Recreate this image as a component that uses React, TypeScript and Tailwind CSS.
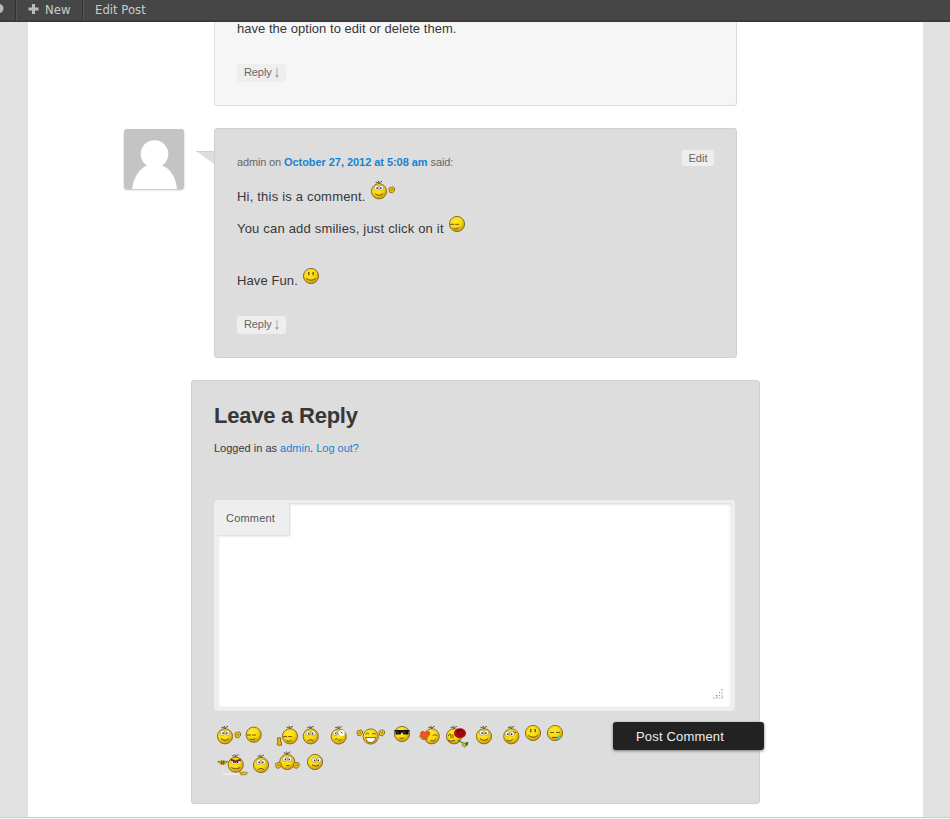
import type { ReactNode } from "react";

type Mood = "plain" | "wink" | "happy" | "sad" | "crazy" | "laugh" | "cool" | "love" | "rose" | "look" | "dots" | "cry" | "angry" | "grin";

function Eyes({ x = 0, y = -3.5 }: { x?: number; y?: number }) {
  return (
    <g transform={`translate(${x} ${y})`}>
      <ellipse cx="-2.4" rx="2.3" ry="2.5" fill="#fff" stroke="#94834c" strokeWidth=".6" />
      <ellipse cx="2.4" rx="2.3" ry="2.5" fill="#fff" stroke="#94834c" strokeWidth=".6" />
      <path d="M-1.9-.5v1.8M1.9-.5v1.8" stroke="#222" strokeWidth="1.3" />
    </g>
  );
}

function Features({ mood }: { mood: Mood }) {
  const line = { fill: "none", stroke: "#70520a", strokeWidth: 1 };
  switch (mood) {
    case "wink":
      return <g {...line}><path d="M-6.8.3h4M-1.8.3h4" /><path d="M-3.5 4.2q2 1.8 4.2.2l.5-1" /></g>;
    case "happy":
      return <g><Eyes /><path d="M-4 2.3q4 3.5 8 0" {...line} /></g>;
    case "sad":
      return <g><Eyes y={-3} /><path d="M-2.8 4.5q2.8-2.5 5.6 0" {...line} /></g>;
    case "crazy":
      return <g><Eyes x={-1} /><circle cx="3" cy="-3.5" r="3" fill="#fff" /><path d="M2-4.5l2 1.5M-4 3l2-1 2 2 3-1" {...line} /></g>;
    case "laugh":
      return <g><path d="M-5-2.3q1.8-2 3.5 0M1.5-2.3q1.8-2 3.5 0" {...line} /><path d="M-5 1h10q-1 5-5 5t-5-5z" fill="#fff" stroke="#70520a" strokeWidth=".8" /></g>;
    case "cool":
      return <g><path d="M-7.5-4h15v1.5h-1V.5h-5l-1-2h-1l-1 2h-5v-3h-1z" fill="#111" /><path d="M-5.5-2.5l2 2M1.5-2.5l2 2" stroke="#777" strokeWidth=".7" /><path d="M-2.5 4q2.5 1 4.5-.3" {...line} /></g>;
    case "love":
      return <g {...line}><path d="M1-.8q2-1.5 4.5 0M-1 4q3 2 5-1" /></g>;
    case "rose":
      return <g {...line}><path d="M-6 4q3 2 7 0M-6 0q1-3 3-2v4M-1-2v4" /></g>;
    case "look":
      return <g><Eyes x={-1.5} y={-2.5} /><path d="M-5 3.5q4 3 6.5-1M2-4.5l3 1" {...line} /></g>;
    case "dots":
      return <g><path d="M-2.2-4v3.2M2.2-4v3.2" stroke="#5c4708" strokeWidth="1.3" /><path d="M-4.8 2.5q4.8 3.4 9.6 0" {...line} /></g>;
    case "cry":
      return <g><path d="M-5-.8q2 1 4 0M1-.8q2 1 4 0M-3 4.5h5.5" {...line} /><circle cx="3.9" cy="4.2" r="1.5" fill="#49c5ec" /></g>;
    case "angry":
      return <g><Eyes y={-3} /><path d="M-5-5l5 2 5-2" fill="none" stroke="#7e2808" strokeWidth="1.8" /><path d="M-4.5 3q4.5 2.5 9 0" {...line} /></g>;
    case "grin":
      return <g><Eyes x={1.5} y={-2} /><path d="M-3 3q4.5 2.5 7 0" {...line} /></g>;
    default:
      return <g><Eyes y={-3} /><path d="M-1 3.5h3" {...line} /></g>;
  }
}

function Smiley({ w, cx, cy = 14, mood, hair = false, children }: { w: number; cx: number; cy?: number; mood: Mood; hair?: boolean; children?: ReactNode }) {
  return (
    <svg width={w} height="28" viewBox={`0 0 ${w} 28`} className="block shrink-0 overflow-visible">
      <defs>
        <radialGradient id="face" cx="42%" cy="35%" r="68%">
          <stop offset="0" stopColor="#ffec28" />
          <stop offset=".55" stopColor="#f7d90f" />
          <stop offset="1" stopColor="#c48d0a" />
        </radialGradient>
      </defs>
      <g transform={`translate(${cx} ${cy})`}>
        <circle r="7.6" fill="url(#face)" stroke="#8d6f2c" strokeWidth="1" />
        {hair && <path d="M0-7.5q-1-2-3.5-1.5M0-7.5q0-2-1-3M0-7.5q1-2.5 3-2.5" fill="none" stroke="#655438" strokeWidth="1" />}
        <Features mood={mood} />
        {children}
      </g>
    </svg>
  );
}

function Hand({ x, y }: { x: number; y: number }) {
  return (
    <g transform={`translate(${x} ${y})`} stroke="#8a6c20" strokeWidth=".9">
      <path d="M-2.8-1.5l1.5-1.5 1 .5 1-.8 2.2 1.3-.2 3-2 1.8-2.7-.5z" fill="#e9c51a" />
      <path d="M-1-.5l1.5 1M.5-1.5l.7 1.5" fill="none" />
    </g>
  );
}

function Waving() {
  return <Smiley w={28} cx={9} cy={14.3} mood="happy" hair><Hand x={12.7} y={-1.3} /></Smiley>;
}

function ReplyButton() {
  return (
    <span className="flex h-[18px] w-[49px] rounded-[3px] bg-[#eee] pl-[7px] text-[11px] leading-[17px] tracking-[-0.1px] text-[#666]">
      Reply
      <span className="ml-[2px] scale-y-140 font-['Liberation_Serif',serif] text-[12px] leading-[17px] text-[#777]">↓</span>
    </span>
  );
}

export default function App() {
  return (
    <div className="h-[819px] w-[950px] overflow-hidden bg-[#e2e2e2] font-['Liberation_Sans',Arial,sans-serif] text-[#373737]">
      <header className="flex h-[22px] border-b border-[#373737] bg-[#464646] font-['DejaVu_Sans_Condensed','DejaVu_Sans',sans-serif] text-[13px] leading-[20px] text-[#ccc] shadow-[inset_0_-1px_#3e3e3e]">
        <div className="h-[21px] w-[17px] border-r border-[#555] shadow-[inset_-1px_0_#333]">
          <svg width="5" height="20" viewBox="0 0 5 20"><circle cx="-1" cy="8.5" r="4.5" fill="#bbb" /></svg>
        </div>
        <div className="flex h-[21px] w-[67px] border-r border-[#555] pl-[11px] shadow-[inset_-1px_0_#333]">
          <svg width="17" height="20" viewBox="0 0 17 20"><path d="M5.5 4v10M.5 9h10" stroke="#bbb" strokeWidth="3" /></svg>
          New
        </div>
        <div className="pl-[11px]">Edit Post</div>
      </header>

      <main className="ml-[28px] h-[795px] w-[895px] bg-white">
        <article className="ml-[186px] h-[84px] w-[523px] rounded-b-[3px] border border-t-0 border-[#ddd] bg-[#f6f6f6] pl-[22px] text-[13px]">
          <p className="h-[42px] leading-[14px] tracking-[0.03px]">have the option to edit or delete them.</p>
          <ReplyButton />
        </article>

        <div className="mt-[22px] flex">
          <div className="ml-[96px] mt-px h-[60px] w-[60px] overflow-hidden rounded-[3px] bg-[#c4c4c4] shadow-[0_1px_2px_#bbb]">
            <svg width="60" height="60" viewBox="0 0 60 60" fill="#fff"><circle cx="30.5" cy="25" r="13.8" /><path d="M8 60C10 47 16 39 24 36h13c9 3 15 12 16 24z" /></svg>
          </div>
          <svg className="ml-[12px] mt-[23px] h-[14px] w-[18px]" viewBox="0 0 18 14"><path d="M0 0h18v13z" fill="#ddd" /><path d="M0 .5h18" stroke="#d0d0d0" /></svg>
          <article className="h-[230px] w-[523px] rounded-[3px] border border-[#d0d0d0] bg-[#ddd] px-[22px]">
            <div className="flex justify-between">
              <p className="pt-[27px] text-[11px] leading-[13px] text-[#666]"><span className="tracking-[-0.15px]">admin on </span><b className="tracking-[-0.05px] text-[#1982d1]">October 27, 2012 at 5:08 am</b><span className="tracking-[-0.1px]"> said:</span></p>
              <span className="mt-[21px] h-[16px] w-[32px] rounded-[3px] bg-[#eee] text-center text-[11px] leading-[16px] text-[#666]">Edit</span>
            </div>
            <div className="mt-[8px] flex h-[32px] text-[13px] leading-[40px] tracking-[0.2px]">Hi, this is a comment.<span className="ml-[4px]"><Waving /></span></div>
            <div className="flex h-[52px] text-[13px] leading-[40px] tracking-[0.19px]">You can add smilies, just click on it<span className="ml-[4px] mt-px"><Smiley w={18} cx={9} cy={14} mood="wink" /></span></div>
            <div className="flex h-[55px] text-[13px] leading-[40px] tracking-[0.1px]">Have Fun.<span className="ml-[4px] mt-px"><Smiley w={18} cx={9} cy={14} mood="dots" /></span></div>
            <ReplyButton />
          </article>
        </div>

        <section className="ml-[163px] mt-[22px] h-[424px] w-[569px] rounded-[3px] border border-[#d0d0d0] bg-[#ddd] pl-[22px]">
          <h3 className="pt-[21px] text-[22px] font-bold leading-[28px] tracking-[-0.23px]">Leave a Reply</h3>
          <p className="mt-[12px] text-[11px] leading-[13px]">Logged in as <span className="text-[#1982d1]">admin</span>. <span className="text-[#1982d1]">Log out?</span></p>
          <div className="mt-[45px] flex h-[211px] w-[521px] items-start justify-between rounded-[4px] border-[4px] border-t-[3px] border-[#eee] bg-white shadow-[inset_0_1px_3px_#d4d4d4]">
            <div className="-ml-px h-[32px] w-[72px] bg-[#eee] pl-[9px] text-[11px] leading-[30px] tracking-[0.2px] text-[#555] shadow-[1px_1px_2px_#d4d4d4]">Comment</div>
            <svg className="mb-[7px] mr-[7px] self-end" width="11" height="11" viewBox="0 0 11 11" fill="#d6d6d6"><path d="M8 0h2v2H8zM8 3h2v2H8zM8 6h2v2H8zM3 6h2v2H3zM8 8h2v2H8zM6 8h1v2H6zM3 8h2v2H3zM0 8h2v2H0z" /><path d="M6 3h1v1H6zM6 6h1v1H6zM3 6h1v1H3z" fill="#888" /></svg>
          </div>
          <div className="mt-[11px] flex">
            <div className="w-[399px] shrink-0">
              <div className="flex h-[28px]">
                <span className="ml-[2px]"><Waving /></span>
                <Smiley w={30} cx={9.7} cy={12.7} mood="wink" />
                <Smiley w={26} cx={16} cy={14.3} mood="wink" hair>
                  <path d="M-12.5-1h3v4l1 .5v3h-3l-1.5-1 .8-2z" fill="#e6b918" stroke="#8a6c20" transform="translate(0 2.5)" />
                </Smiley>
                <Smiley w={28} cx={10.7} cy={14.3} mood="sad" hair />
                <Smiley w={26} cx={10.7} cy={14.5} mood="crazy" hair />
                <Smiley w={36} cx={16.7} cy={14.5} mood="laugh"><Hand x={-11} y={-3.5} /><Hand x={11} y={-3.5} /></Smiley>
                <Smiley w={28} cx={12} cy={12} mood="cool" />
                <Smiley w={28} cx={13.7} cy={14.3} mood="love" hair>
                  <path d="M-12-1l3 3.5h5" fill="none" stroke="#b98720" strokeWidth="2.5" /><path d="M-6.5 3q-6-4.5-4.3-7.2 2.3-2.2 4.3.6 2-2.8 4.3-.6 1.7 2.7-4.3 7.2z" fill="#f4531f" stroke="#c94913" strokeWidth=".7" />
                </Smiley>
                <Smiley w={28} cx={8} cy={14.3} mood="rose" hair>
                  <path d="M4 4l7 4M8 8l6-2-1 3-3 0z" fill="#158338" stroke="#12782f" /><ellipse cx="6" cy="-3" rx="6" ry="5" fill="#b30912" /><path d="M2-5l4-2 4 3-3 3-4-3 4-2" fill="none" stroke="#69050a" /><path d="M9 6l3 2-1 3-3-2z" fill="#ebbd16" stroke="#8a6c20" strokeWidth=".6" />
                </Smiley>
                <Smiley w={26} cx={10} cy={14.3} mood="happy" hair />
                <Smiley w={24} cx={11.3} cy={14.3} mood="look" hair />
                <Smiley w={22} cx={9} cy={11} mood="dots" />
                <Smiley w={20} cx={9} cy={11} mood="cry" />
              </div>
              <div className="flex h-[28px]">
                <Smiley w={36} cx={21.7} cy={14.7} mood="angry" hair>
                  <path d="M-18-3h10" stroke="#2f8a32" strokeWidth="1.5" /><ellipse cx="-13" cy="-2.2" rx="3.5" ry="2.2" fill="#c59a20" /><path d="M-14-4v4M-12-4v4" stroke="#493918" strokeWidth=".8" /><path d="M-13 9.3H4" stroke="#f6f6f6" /><path d="M4 7.5h6l2 1-2 1.5H5z" fill="#e5c51b" stroke="#8c6d15" strokeWidth=".7" />
                </Smiley>
                <Smiley w={24} cx={11} cy={15} mood="sad" hair />
                <Smiley w={30} cx={13.3} cy={12} mood="plain" hair><Hand x={-9} y={3.5} /><Hand x={9} y={3.5} /></Smiley>
                <Smiley w={22} cx={11} cy={12} mood="grin" />
              </div>
            </div>
            <button className="h-[28px] w-[151px] shrink-0 rounded-[3px] bg-[#222] pl-[23px] pt-[2px] text-left text-[13px] tracking-[0.17px] text-[#eee] shadow-[0_1px_3px_#777]">Post Comment</button>
          </div>
        </section>
      </main>
      <div className="h-[2px] border-t border-[#ccc] bg-[#f5f5f5]" />
    </div>
  );
}
